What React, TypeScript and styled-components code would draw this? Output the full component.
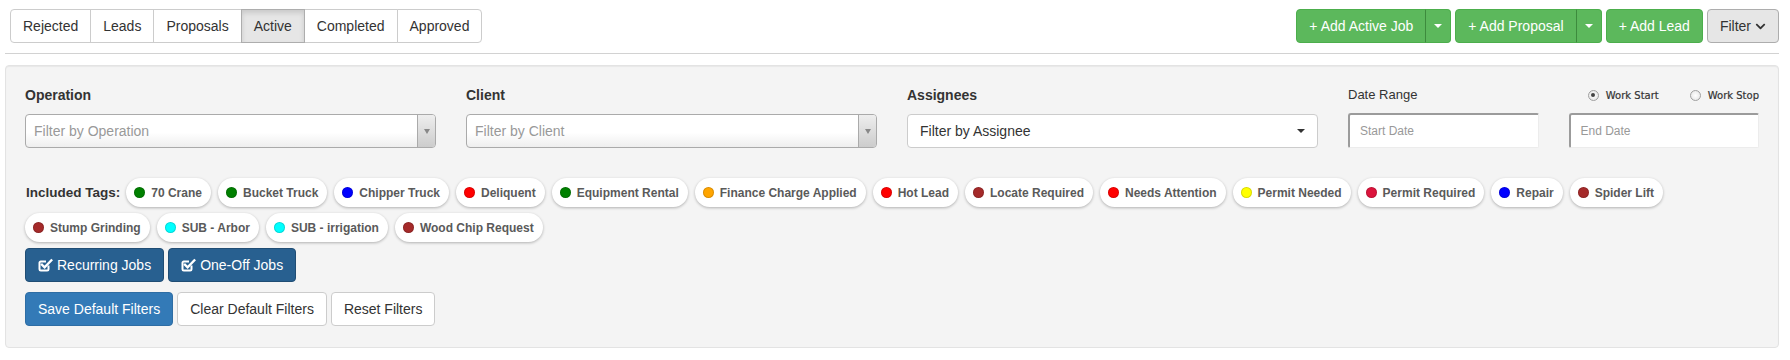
import styled, { createGlobalStyle } from "styled-components";
import { FaChevronDown } from "react-icons/fa";

const GlobalStyle = createGlobalStyle`
  body {
    margin: 0;
    background: #fff;
    font-family: "Liberation Sans", Arial, sans-serif;
    font-size: 14px;
    color: #333;
  }
  * { box-sizing: border-box; }
`;

const Page = styled.div`
  padding: 9px 11px 0 5px;
`;

const TopBar = styled.div`
  display: flex;
  justify-content: space-between;
  align-items: flex-start;
  padding: 0 0 10px 5px;
  border-bottom: 1px solid #d2d2d2;
`;

const BtnGroup = styled.div`
  display: flex;
`;

const TabButton = styled.button<{ $active?: boolean }>`
  font: inherit;
  font-size: 14px;
  line-height: 20px;
  height: 34px;
  padding: 6px 12px;
  margin-left: -1px;
  border: 1px solid ${({ $active }) => ($active ? "#adadad" : "#ccc")};
  background: ${({ $active }) => ($active ? "#e6e6e6" : "#fff")};
  box-shadow: ${({ $active }) =>
    $active ? "inset 0 3px 5px rgba(0,0,0,.125)" : "none"};
  color: #333;
  position: relative;
  z-index: ${({ $active }) => ($active ? 1 : 0)};
  &:first-child {
    margin-left: 0;
    border-radius: 4px 0 0 4px;
  }
  &:last-child {
    border-radius: 0 4px 4px 0;
  }
`;

const Actions = styled.div`
  display: flex;
  gap: 4px;
`;

const GreenButton = styled.button<{ $caret?: boolean }>`
  font: inherit;
  font-size: 14px;
  line-height: 20px;
  height: 34px;
  padding: ${({ $caret }) => ($caret ? "6px 8px" : "6px 12px")};
  background: #5cb85c;
  border: 1px solid #4cae4c;
  color: #fff;
  border-radius: 4px;
  display: flex;
  align-items: center;
  & + & {
    margin-left: -1px;
  }
  ${BtnGroup} > &:first-child:not(:last-child) {
    border-radius: 4px 0 0 4px;
  }
  ${BtnGroup} > &:last-child:not(:first-child) {
    border-radius: 0 4px 4px 0;
    border-left-color: #3d8b3d;
  }
`;

const Caret = styled.span<{ $color: string }>`
  display: inline-block;
  width: 0;
  height: 0;
  border-top: 4px solid ${({ $color }) => $color};
  border-left: 4px solid transparent;
  border-right: 4px solid transparent;
`;

const FilterButton = styled.button`
  font: inherit;
  font-size: 14px;
  line-height: 20px;
  height: 34px;
  padding: 6px 12px;
  background: #e6e6e6;
  border: 1px solid #adadad;
  border-radius: 4px;
  color: #333;
  display: flex;
  align-items: center;
  gap: 4px;
`;

const Well = styled.div`
  margin-top: 11px;
  background: #f4f4f4;
  border: 1px solid #e3e3e3;
  border-radius: 4px;
  box-shadow: inset 0 1px 1px rgba(0, 0, 0, 0.05);
  padding: 19px 19px 21px;
`;

const FilterGrid = styled.div`
  display: grid;
  grid-template-columns: repeat(4, 1fr);
  column-gap: 30px;
`;

const Field = styled.div`
  display: flex;
  flex-direction: column;
`;

const FieldLabel = styled.div`
  font-weight: bold;
  font-size: 14px;
  line-height: 20px;
  margin-bottom: 9px;
  color: #333;
`;

const ChosenSelect = styled.div`
  height: 34px;
  display: flex;
  border: 1px solid #aaa;
  border-radius: 4px;
  background: linear-gradient(to bottom, #fff 0%, #fff 55%, #eee 100%);
  overflow: hidden;
`;

const ChosenText = styled.div`
  flex: 1;
  display: flex;
  align-items: center;
  padding-left: 8px;
  color: #999;
  font-size: 14px;
`;

const ChosenArrow = styled.div`
  width: 18px;
  border-left: 1px solid #aaa;
  background: linear-gradient(to bottom, #eee, #ccc);
  display: flex;
  align-items: center;
  justify-content: center;
`;

const SelectPicker = styled.div`
  height: 34px;
  display: flex;
  align-items: center;
  justify-content: space-between;
  padding: 0 12px;
  background: #fff;
  border: 1px solid #ccc;
  border-radius: 4px;
  color: #333;
  font-size: 14px;
`;

const DateCol = styled.div`
  display: grid;
  grid-template-columns: 1fr 1fr;
  column-gap: 30px;
  row-gap: 7px;
`;

const DateLabel = styled.div`
  font-size: 13px;
  line-height: 20px;
  color: #333;
`;

const RadioGroup = styled.div`
  display: flex;
  justify-content: flex-end;
  align-items: center;
  gap: 31px;
  height: 20px;
`;

const RadioItem = styled.label`
  display: flex;
  align-items: center;
  gap: 7px;
  font-family: "DejaVu Sans", Verdana, sans-serif;
  font-size: 10px;
  color: #333;
  -webkit-text-stroke: 0.2px #333;
`;

const RadioDot = styled.span<{ $checked?: boolean }>`
  width: 11px;
  height: 11px;
  border-radius: 50%;
  border: 1px solid #a0a0a0;
  background: radial-gradient(circle, #fff 0%, #e2e2e2 100%);
  display: flex;
  align-items: center;
  justify-content: center;
  &::after {
    content: "";
    width: 4px;
    height: 4px;
    border-radius: 50%;
    background: ${({ $checked }) => ($checked ? "#444" : "transparent")};
  }
`;

const DateInput = styled.div`
  height: 35px;
  display: flex;
  align-items: center;
  padding-left: 10px;
  background: #fff;
  border-radius: 3px 2px 2px 2px;
  border-top: 2px solid #9b9b9b;
  border-left: 2px solid #9b9b9b;
  border-right: 1px solid #ececec;
  border-bottom: 1px solid #ececec;
  color: #999;
  font-size: 12px;
`;

const Tags = styled.div`
  margin-top: 30px;
  display: flex;
  flex-wrap: wrap;
  align-items: center;
  column-gap: 6px;
  row-gap: 6px;
`;

const TagsLabel = styled.span`
  font-weight: bold;
  font-size: 13.5px;
  margin-left: 1px;
  color: #333;
`;

const Pill = styled.span`
  height: 29px;
  display: inline-flex;
  align-items: center;
  gap: 6px;
  padding: 0 9px 0 8px;
  margin-right: 1px;
  background: #fff;
  border-radius: 15px;
  box-shadow: 0 1px 3px rgba(0, 0, 0, 0.28);
  font-size: 12px;
  font-weight: bold;
  color: #5a5a5a;
`;

const Dot = styled.span<{ $color: string }>`
  width: 11px;
  height: 11px;
  border-radius: 50%;
  background: ${({ $color }) => $color};
  box-shadow: inset 0 0 0 1px rgba(0, 0, 0, 0.15);
`;

const ButtonRow = styled.div<{ $top: number }>`
  display: flex;
  gap: 4px;
  margin-top: ${({ $top }) => $top}px;
`;

const ActionButton = styled.button<{ $variant: "toggle" | "primary" | "default" }>`
  font: inherit;
  font-size: 14px;
  line-height: 20px;
  height: 34px;
  padding: 6px 12px;
  border-radius: 4px;
  display: flex;
  align-items: center;
  gap: 4px;
  border: 1px solid
    ${({ $variant }) =>
      $variant === "toggle" ? "#204d74" : $variant === "primary" ? "#2e6da4" : "#ccc"};
  background: ${({ $variant }) =>
    $variant === "toggle" ? "#286090" : $variant === "primary" ? "#337ab7" : "#fff"};
  color: ${({ $variant }) => ($variant === "default" ? "#333" : "#fff")};
`;

const CheckIcon = () => (
  <svg width="15" height="14" viewBox="0 0 15 14" aria-hidden>
    <path
      d="M10.5 7.5 V11.2 a1.3 1.3 0 0 1 -1.3 1.3 H2.8 a1.3 1.3 0 0 1 -1.3 -1.3 V4.8 a1.3 1.3 0 0 1 1.3 -1.3 H8"
      fill="none"
      stroke="#fff"
      strokeWidth="2"
    />
    <path
      d="M4 6.8 L6.6 9.4 L13.3 2.4"
      fill="none"
      stroke="#fff"
      strokeWidth="2.4"
      strokeLinecap="square"
    />
  </svg>
);

const tabs = ["Rejected", "Leads", "Proposals", "Active", "Completed", "Approved"];

const tags: [string, string][] = [
  ["70 Crane", "#008000"],
  ["Bucket Truck", "#008000"],
  ["Chipper Truck", "#0000ff"],
  ["Deliquent", "#ff0000"],
  ["Equipment Rental", "#008000"],
  ["Finance Charge Applied", "#ffa500"],
  ["Hot Lead", "#ff0000"],
  ["Locate Required", "#a52a2a"],
  ["Needs Attention", "#ff0000"],
  ["Permit Needed", "#ffff00"],
  ["Permit Required", "#dc143c"],
  ["Repair", "#0000ff"],
  ["Spider Lift", "#a52a2a"],
  ["Stump Grinding", "#a52a2a"],
  ["SUB - Arbor", "#00ffff"],
  ["SUB - irrigation", "#00ffff"],
  ["Wood Chip Request", "#a52a2a"],
];

const ChosenTriangle = () => (
  <svg width="6" height="5" viewBox="0 0 6 5" aria-hidden>
    <path d="M0 0 H6 L3 5 Z" fill="#888" />
  </svg>
);

export default function App() {
  return (
    <Page>
      <GlobalStyle />
      <TopBar>
        <BtnGroup>
          {tabs.map((t) => (
            <TabButton key={t} $active={t === "Active"}>
              {t}
            </TabButton>
          ))}
        </BtnGroup>
        <Actions>
          <BtnGroup>
            <GreenButton>+ Add Active Job</GreenButton>
            <GreenButton $caret>
              <Caret $color="#fff" />
            </GreenButton>
          </BtnGroup>
          <BtnGroup>
            <GreenButton>+ Add Proposal</GreenButton>
            <GreenButton $caret>
              <Caret $color="#fff" />
            </GreenButton>
          </BtnGroup>
          <GreenButton>+ Add Lead</GreenButton>
          <FilterButton>
            Filter <FaChevronDown size={11} />
          </FilterButton>
        </Actions>
      </TopBar>

      <Well>
        <FilterGrid>
          <Field>
            <FieldLabel>Operation</FieldLabel>
            <ChosenSelect>
              <ChosenText>Filter by Operation</ChosenText>
              <ChosenArrow>
                <ChosenTriangle />
              </ChosenArrow>
            </ChosenSelect>
          </Field>
          <Field>
            <FieldLabel>Client</FieldLabel>
            <ChosenSelect>
              <ChosenText>Filter by Client</ChosenText>
              <ChosenArrow>
                <ChosenTriangle />
              </ChosenArrow>
            </ChosenSelect>
          </Field>
          <Field>
            <FieldLabel>Assignees</FieldLabel>
            <SelectPicker>
              Filter by Assignee
              <Caret $color="#333" />
            </SelectPicker>
          </Field>
          <DateCol>
            <DateLabel>Date Range</DateLabel>
            <RadioGroup>
              <RadioItem>
                <RadioDot $checked />
                Work Start
              </RadioItem>
              <RadioItem>
                <RadioDot />
                Work Stop
              </RadioItem>
            </RadioGroup>
            <DateInput>Start Date</DateInput>
            <DateInput>End Date</DateInput>
          </DateCol>
        </FilterGrid>

        <Tags>
          <TagsLabel>Included Tags:</TagsLabel>
          {tags.map(([name, color]) => (
            <Pill key={name}>
              <Dot $color={color} />
              {name}
            </Pill>
          ))}
        </Tags>

        <ButtonRow $top={6}>
          <ActionButton $variant="toggle">
            <CheckIcon />
            Recurring Jobs
          </ActionButton>
          <ActionButton $variant="toggle">
            <CheckIcon />
            One-Off Jobs
          </ActionButton>
        </ButtonRow>

        <ButtonRow $top={10}>
          <ActionButton $variant="primary">Save Default Filters</ActionButton>
          <ActionButton $variant="default">Clear Default Filters</ActionButton>
          <ActionButton $variant="default">Reset Filters</ActionButton>
        </ButtonRow>
      </Well>
    </Page>
  );
}
